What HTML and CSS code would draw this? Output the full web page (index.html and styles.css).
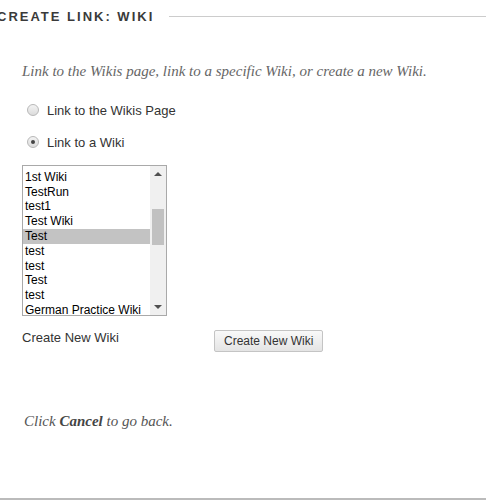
FILE: index.html
```html
<!DOCTYPE html>
<html>
<head>
<meta charset="utf-8">
<title>Create Link: Wiki</title>
<link rel="stylesheet" href="styles.css">
</head>
<body>
<div class="page">
  <div class="steptitle">
    <h1>Create Link: Wiki</h1>
    <span class="rule"></span>
  </div>

  <p class="instructions">Link to the Wikis page, link to a specific Wiki, or create a new Wiki.</p>

  <ul class="choices">
    <li><span class="radio"></span>Link to the Wikis Page</li>
    <li><span class="radio checked"></span>Link to a Wiki</li>
  </ul>

  <div class="listbox">
    <ul class="items">
      <li>Wiki Three</li>
      <li>1st Wiki</li>
      <li>TestRun</li>
      <li>test1</li>
      <li>Test Wiki</li>
      <li class="sel">Test</li>
      <li>test</li>
      <li>test</li>
      <li>Test</li>
      <li>test</li>
      <li>German Practice Wiki</li>
    </ul>
    <div class="scroll">
      <span class="arrow up"></span>
      <span class="track"><span class="thumb"></span></span>
      <span class="arrow down"></span>
    </div>
  </div>

  <div class="newwiki">
    <span class="label">Create New Wiki</span>
    <button class="btn">Create New Wiki</button>
  </div>

  <p class="cancel">Click <strong>Cancel</strong> to go back.</p>
</div>
</body>
</html>
```

FILE: styles.css
```css
*{margin:0;padding:0;box-sizing:border-box;}
body{font-family:"Liberation Sans",Arial,sans-serif;font-size:13px;color:#333;background:#fff;}
.page{height:500px;border-bottom:2px solid #bbb;overflow:hidden;}

.steptitle{display:flex;align-items:center;padding-top:9px;margin-left:-3px;}
.steptitle h1{font-size:13px;font-weight:700;text-transform:uppercase;letter-spacing:2px;color:#3a3a3a;line-height:15px;}
.steptitle .rule{flex:1;height:1px;background:#ccc;margin-left:15px;}

.instructions{font-family:"Liberation Serif","DejaVu Serif",serif;font-style:italic;font-size:15px;color:#666;margin:38px 0 0 22px;line-height:18px;}

.choices{list-style:none;margin:21px 0 0 27px;}
.choices li{display:flex;align-items:center;height:18px;margin-bottom:14px;}
.radio{width:12px;height:12px;border-radius:50%;border:1px solid #b8b8b8;background:linear-gradient(#f3f3f3,#dcdcdc);margin-right:8px;position:relative;}
.radio.checked::after{content:"";position:absolute;left:3px;top:3px;width:4px;height:4px;border-radius:50%;background:#444;}

.listbox{display:flex;width:145px;height:151px;border:1px solid #a9a9a9;margin:2px 0 0 22px;overflow:hidden;}
.items{flex:1;list-style:none;margin-top:-11px;font-size:12px;color:#000;}
.items li{height:14.8px;line-height:14.8px;padding-left:2px;white-space:nowrap;}
.items li.sel{background:#c3c3c3;}
.scroll{width:16px;background:#f0f0f0;display:flex;flex-direction:column;align-items:center;}
.arrow{width:0;height:0;border-left:4px solid transparent;border-right:4px solid transparent;margin:6px 0;}
.arrow.up{border-bottom:4px solid #505050;}
.arrow.down{border-top:4px solid #505050;}
.track{flex:1;width:100%;padding:27px 2px 0 2px;}
.thumb{display:block;height:36px;background:#c1c1c1;}

.newwiki{display:flex;align-items:flex-start;margin:14px 0 0 22px;}
.newwiki .label{width:192px;font-size:13px;line-height:15px;}
.btn{font-family:inherit;font-size:12px;color:#333;padding:0 9px;height:22px;border:1px solid #c4c4c4;border-radius:2px;background:linear-gradient(#f9f9f9,#e4e4e4);}

.cancel{font-family:"Liberation Serif","DejaVu Serif",serif;font-style:italic;font-size:15px;color:#555;margin:61px 0 0 24px;}
.cancel strong{font-weight:700;color:#444;}
```
